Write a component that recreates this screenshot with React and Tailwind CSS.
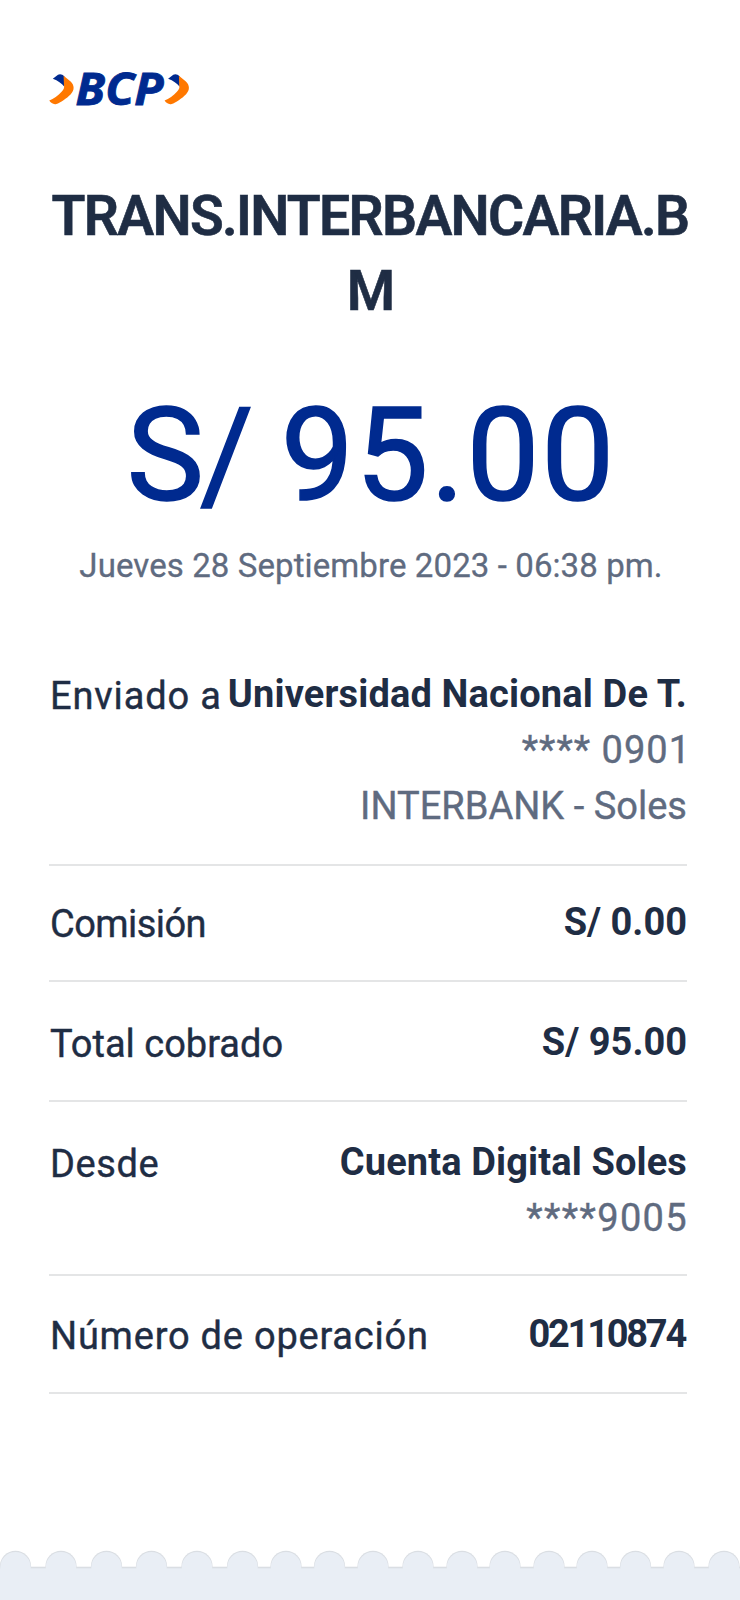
const rows = [
  {
    label: "Enviado a",
    labelClass: "tracking-[0.85px]",
    value: "Universidad Nacional De T.",
    valueClass: "tracking-[0.15px]",
    details: [
      { text: "**** 0901", className: "tracking-[1px] -mr-[4px]" },
      { text: "INTERBANK - Soles", className: "tracking-[0.02px]" },
    ],
    className: "pb-[30px]",
  },
  {
    label: "Comisión",
    labelClass: "tracking-[-0.56px]",
    value: "S/ 0.00",
    valueClass: "",
    details: [],
    className: "pt-7 pb-[30px]",
  },
  {
    label: "Total cobrado",
    labelClass: "",
    value: "S/ 95.00",
    valueClass: "",
    details: [],
    className: "pt-8 pb-[30px]",
  },
  {
    label: "Desde",
    labelClass: "tracking-[0.6px]",
    value: "Cuenta Digital Soles",
    valueClass: "tracking-[0.12px]",
    details: [{ text: "****9005", className: "tracking-[1.35px] -mr-[1px]" }],
    className: "pt-8 pb-7",
  },
  {
    label: "Número de operación",
    labelClass: "tracking-[0.78px]",
    value: "02110874",
    valueClass: "tracking-[-2.23px] mr-[2px]",
    details: [],
    className: "pt-[30px] pb-[30px]",
  },
];

const scallops = [15.5, 61, 106.5, 151.5, 197, 242.5, 286, 329.5, 373, 418, 462, 505, 549, 592, 635.5, 679, 724];

function Chevron({ x }) {
  return (
    <g transform={`translate(${x} 0)`}>
      <path d="M3.8 12.8L9 8.8C11 7.6 13.5 8.4 15.4 10.4V20.8C12.5 17.5 9 14.6 3.8 12.8Z" fill="#002a8f" />
      <path d="M14.6 9.8L21.6 15.6C25.6 19.4 25.6 24.4 21.8 28.2C17.5 32.5 11.5 36.6 7.4 38C4.4 38.8 1.8 37 0.3 34.6C4.5 33.2 9.2 29.6 12.6 25.8C15 23 15.4 21.4 15 19.4Z" fill="#ff7800" />
    </g>
  );
}

function Logo() {
  return (
    <svg className="block" width="142" height="64" viewBox="0 -10 142 64" role="img" aria-label="BCP">
      <Chevron x={0} />
      <text x="26.5" y="39.3" fill="#002a8f" stroke="#002a8f" strokeWidth="0.9" fontFamily="'Open Sans', sans-serif" fontSize="45.5" fontWeight="700" fontStyle="italic" textLength="88" lengthAdjust="spacingAndGlyphs">
        BCP
      </text>
      <Chevron x={115.3} />
    </svg>
  );
}

function TornEdge() {
  return (
    <svg className="block" width="740" height="52" viewBox="0 0 740 52" aria-hidden="true">
      <g fill="#dadee3">
        <rect y="18.7" width="740" height="34" />
        {scallops.map((x) => <circle key={x} cx={x} cy="18.4" r="15.6" />)}
      </g>
      <g fill="#e9eef5">
        <rect y="20.3" width="740" height="32" />
        {scallops.map((x) => <circle key={x} cx={x} cy="19.2" r="15.2" />)}
      </g>
    </svg>
  );
}

export default function App() {
  return (
    <main className="flex h-[1600px] w-[740px] flex-col bg-white font-['Roboto',sans-serif] text-[#1f2d44]">
      <header className="h-[178px] pt-[56px] pl-[49px]">
        <Logo />
      </header>
      <h1 className="pt-px text-center text-[55.3px] leading-[75px] font-semibold tracking-[-1.7px] [-webkit-text-stroke:0.6px_#1f2d44]">
        TRANS.INTERBANCARIA.B
        <br />M
      </h1>
      <p className="mt-[57px] pl-[3px] text-center text-[130px] leading-[140px] tracking-[1.8px] text-[#002a8f] [-webkit-text-stroke:1.6px_#002a8f] [word-spacing:-3px]">
        <span className="tracking-[-4px]">S/</span> 95.00
      </p>
      <p className="mt-[18px] pl-[2px] text-center text-[33px] leading-[44px] tracking-[0.1px] text-[#5f6b80] [-webkit-text-stroke:0.3px_#5f6b80]">
        Jueves 28 Septiembre 2023 - 06:38 pm.
      </p>
      <section className="mx-[49px] mt-[78px] mr-[53px] text-[38px] leading-[56px] whitespace-nowrap">
        {rows.map((row) => (
          <div key={row.label} className={`flex justify-between border-b-2 border-[#e4e5e6] ${row.className}`}>
            <span className={`-mb-[2px] pt-[2px] pl-[1px] [-webkit-text-stroke:0.4px_#1f2d44] ${row.labelClass}`}>{row.label}</span>
            <div className="flex flex-col items-end">
              <span className={`font-bold ${row.valueClass}`}>{row.value}</span>
              {row.details.map((detail) => (
                <span key={detail.text} className={`text-[#5f6b80] [-webkit-text-stroke:0.4px_#5f6b80] ${detail.className}`}>{detail.text}</span>
              ))}
            </div>
          </div>
        ))}
      </section>
      <footer className="mt-auto">
        <TornEdge />
      </footer>
    </main>
  );
}
